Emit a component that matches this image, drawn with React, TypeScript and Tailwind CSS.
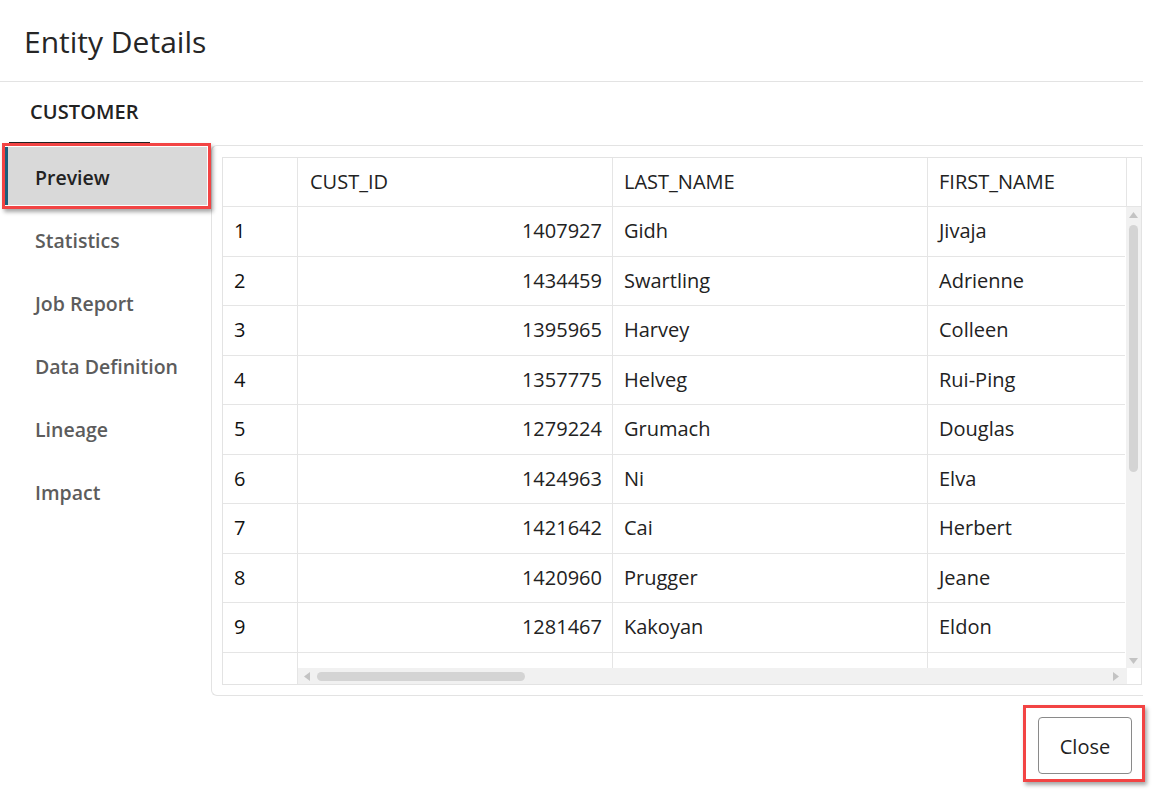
import React from "react"

const rows = [
  { n: 1, id: "1407927", last: "Gidh", first: "Jivaja" },
  { n: 2, id: "1434459", last: "Swartling", first: "Adrienne" },
  { n: 3, id: "1395965", last: "Harvey", first: "Colleen" },
  { n: 4, id: "1357775", last: "Helveg", first: "Rui-Ping" },
  { n: 5, id: "1279224", last: "Grumach", first: "Douglas" },
  { n: 6, id: "1424963", last: "Ni", first: "Elva" },
  { n: 7, id: "1421642", last: "Cai", first: "Herbert" },
  { n: 8, id: "1420960", last: "Prugger", first: "Jeane" },
  { n: 9, id: "1281467", last: "Kakoyan", first: "Eldon" },
]

const menu = ["Statistics", "Job Report", "Data Definition", "Lineage", "Impact"]

function App() {
  return (
    <div className="relative w-[1154px] h-[791px] overflow-hidden bg-white text-[#222] font-['Open_Sans',sans-serif]">
      {/* title */}
      <header className="w-[1143px] h-[82px] border-b border-[#e3e3e3] pl-[24px] pt-[21px]">
        <h1 className="text-[30px] leading-[42px] text-[#262626]">Entity Details</h1>
      </header>

      {/* tabs */}
      <div className="h-[63px] pl-[9px] flex items-end">
        <div className="w-[141px] h-[61px] border-b-[3px] border-[#222] flex items-center pl-[21px] pb-[2px]">
          <span className="text-[20px] font-semibold text-[#222] tracking-[0.1px]">CUSTOMER</span>
        </div>
      </div>

      <div className="flex">
        {/* left nav */}
        <nav className="w-[211px] pt-[2px] shrink-0">
          <div className="ml-[5px] w-[202px] h-[58px] bg-[#d9d9d9] border-l-[3px] border-[#1b5e7b] flex items-center pl-[27px] pt-[4px] mb-[4px]">
            <span className="text-[19.5px] font-semibold text-[#222]">Preview</span>
          </div>
          {menu.map((m) => (
            <div key={m} className="h-[63px] flex items-center pl-[35px] pt-[1px]">
              <span className="text-[19.5px] font-semibold text-[#5c5c5c]">{m}</span>
            </div>
          ))}
        </nav>

        {/* panel */}
        <section className="w-[932px] h-[551px] border-t border-l border-b border-[#e3e3e3] rounded-l-[6px] pl-[10px] pt-[11px]">
          <div className="w-[920px] border border-[#e3e3e3]">
            {/* header */}
            <div className="flex h-[49px] border-b border-[#e5e5e5] text-[20px]">
              <div className="w-[75px] border-r border-[#e5e5e5]" />
              <div className="w-[315px] border-r border-[#e5e5e5] flex items-center pl-[12px]">CUST_ID</div>
              <div className="w-[315px] border-r border-[#e5e5e5] flex items-center pl-[11px]">LAST_NAME</div>
              <div className="w-[199px] border-r border-[#e5e5e5] flex items-center pl-[11px]">FIRST_NAME</div>
              <div className="flex-1" />
            </div>

            {/* body */}
            <div className="flex h-[461px]">
              <div className="w-[903px] overflow-hidden">
                {rows.map((r) => (
                  <div key={r.n} className="flex h-[49.5px] border-b border-[#e5e5e5] text-[20px]">
                    <div className="w-[75px] border-r border-[#e5e5e5] flex items-center pl-[11px] text-[#111]">{r.n}</div>
                    <div className="w-[315px] border-r border-[#e5e5e5] flex items-center justify-end pr-[10px]">{r.id}</div>
                    <div className="w-[315px] border-r border-[#e5e5e5] flex items-center pl-[11px]">{r.last}</div>
                    <div className="flex-1 flex items-center pl-[11px]">{r.first}</div>
                  </div>
                ))}
                <div className="flex h-[40px] border-b border-[#e5e5e5]">
                  <div className="w-[75px] border-r border-[#e5e5e5]" />
                  <div className="w-[315px] border-r border-[#e5e5e5]" />
                  <div className="w-[315px] border-r border-[#e5e5e5]" />
                  <div className="flex-1" />
                </div>
              </div>
              {/* vertical scrollbar */}
              <div className="w-[15px] ml-[1px] bg-[#f1f1f1] flex flex-col items-center">
                <svg width="9" height="6" viewBox="0 0 9 6" className="mt-[5px]">
                  <path d="M0 6 L4.5 0 L9 6 Z" fill="#c3c3c3" />
                </svg>
                <div className="mt-[7px] w-[9px] h-[247px] rounded-full bg-[#d4d4d4]" />
                <div className="flex-1" />
                <svg width="9" height="6" viewBox="0 0 9 6" className="mb-[4px]">
                  <path d="M0 0 L4.5 6 L9 0 Z" fill="#c3c3c3" />
                </svg>
              </div>
            </div>

            {/* horizontal scrollbar row */}
            <div className="flex h-[16px]">
              <div className="w-[75px] border-r border-[#e5e5e5]" />
              <div className="w-[829px] bg-[#f1f1f1] flex items-center pl-[6px] pr-[8px]">
                <svg width="6" height="9" viewBox="0 0 6 9">
                  <path d="M6 0 L0 4.5 L6 9 Z" fill="#c3c3c3" />
                </svg>
                <div className="ml-[7px] w-[208px] h-[9px] rounded-full bg-[#d4d4d4]" />
                <div className="flex-1" />
                <svg width="6" height="9" viewBox="0 0 6 9">
                  <path d="M0 0 L6 4.5 L0 9 Z" fill="#c3c3c3" />
                </svg>
              </div>
              <div className="flex-1" />
            </div>
          </div>
        </section>
      </div>

      {/* footer */}
      <div className="flex justify-end pr-[22px] pt-[21px]">
        <button className="w-[94px] h-[57px] border border-[#8a8a8a] rounded-[4px] text-[20px] text-[#222] bg-white pt-[2px]">
          Close
        </button>
      </div>

      {/* annotation highlights */}
      <div className="absolute left-[2px] top-[143px] w-[209px] h-[66px] border-[3px] border-[#f24444] shadow-[2px_3px_4px_rgba(0,0,0,0.35)]" />
      <div className="absolute left-[1023px] top-[705px] w-[122px] h-[77px] border-[3px] border-[#f24444] shadow-[2px_3px_4px_rgba(0,0,0,0.35)]" />
    </div>
  )
}

export default App
